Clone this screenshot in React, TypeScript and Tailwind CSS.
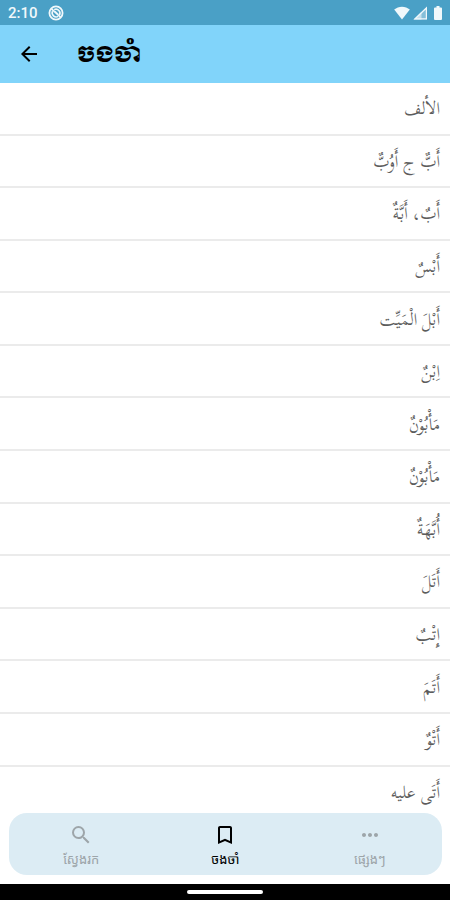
import React from 'react';
import { MdArrowBack, MdBookmarkBorder, MdMoreHoriz, MdSearch } from 'react-icons/md';

interface Tab {
  id: string;
  label: string;
  icon: React.ReactNode;
}

const words = [
  'الألف',
  'أَبٌّ ج أَوُبٌّ',
  'أَبٌ، أَبَّةٌ',
  'أَبْسٌ',
  'أَبْلَ الْمَيِّت',
  'اِبْنٌ',
  'مَأْبُوْنٌ',
  'مَأْبُوْنٌ',
  'أُبَّهَةٌ',
  'أَتَلَ',
  'إِتْبٌ',
  'أَتَمَ',
  'أَتْوٌ',
  'أَتَى عليه',
];

const tabs: Tab[] = [
  { id: 'search', label: 'ស្វែងរក', icon: <MdSearch className="h-6 w-6" /> },
  { id: 'saved', label: 'ចងចាំ', icon: <MdBookmarkBorder className="h-6 w-6" /> },
  { id: 'more', label: 'ផ្សេងៗ', icon: <MdMoreHoriz className="h-6 w-6" /> },
];

const StatusBar: React.FC = () => (
  <div className="flex h-[25px] shrink-0 items-center justify-between bg-[#4aa0c6] px-2 text-[#f0f8fb]">
    <div className="flex items-center gap-2.5">
      <span className="font-['Roboto',sans-serif] text-[15px] font-medium leading-6">2:10</span>
      <svg viewBox="0 0 16 16" className="h-4 w-4" fill="none" stroke="currentColor">
        <circle cx="8" cy="8" r="6.6" strokeWidth="1.8" />
        <path d="M4.600 6.200a4 4 0 005.600 5.200M6.200 4.600a4 4 0 015.200 5.600" strokeWidth="1.600" />
        <path d="M3.500 3.800l9 8.400M7 6.600l3 2.800" strokeWidth="1.600" />
      </svg>
    </div>
    <div className="flex items-center gap-0.5">
      <svg viewBox="0 0 16 14" className="h-3.5 w-4" fill="currentColor">
        <path d="M8 13.400L.2 3.600C2.400 1.700 5.100.7 8 .7s5.600 1 7.800 2.900z" />
      </svg>
      <svg viewBox="0 0 16 14" className="h-3.5 w-4" fill="currentColor">
        <path d="M1.500 13.500L15 .5v13z" opacity=".35" />
        <path d="M1.500 13.500L9.500 5.800v7.700z" opacity=".6" />
        <path d="M1.500 13.500L15 .5v13zM4.500 12.300h9.300V3.400z" fillRule="evenodd" />
      </svg>
      <svg viewBox="0 0 8 14" className="ml-1 h-3.5 w-2" fill="currentColor">
        <path d="M2.500 0h3v1.500H7a1 1 0 011 1V13a1 1 0 01-1 1H1a1 1 0 01-1-1V2.500a1 1 0 011-1h1.500z" />
      </svg>
    </div>
  </div>
);

const App: React.FC = () => {
  const [active, setActive] = React.useState('saved');

  return (
    <div className="flex min-h-screen flex-col bg-white">
      <StatusBar />

      <header className="flex h-[58px] shrink-0 items-center gap-9 bg-[#81d4fa] px-[17px] text-black">
        <button type="button" aria-label="Back">
          <MdArrowBack className="h-6 w-6" />
        </button>
        <h1 className="pt-0.5 font-['Moul','Noto_Sans_Khmer','Noto_Sans',sans-serif] text-[21px] font-normal leading-7">
          ចងចាំ
        </h1>
      </header>

      <ul className="flex flex-1 flex-col" dir="rtl" lang="ar">
        {words.map((word, i) => (
          <li
            key={i}
            className="flex min-h-12 flex-1 items-center border-b-2 border-[#ebebeb] px-[10px] pt-0.5 font-['Scheherazade_New','Amiri','Noto_Naskh_Arabic','Liberation_Serif',serif] text-[17px] leading-6 text-[#5c5c5c] last:border-transparent"
          >
            {word}
          </li>
        ))}
      </ul>

      {/* floating tab bar, overlaps the end of the list */}
      <nav className="relative ml-[9px] mr-2 -mt-1.5 mb-[9px] flex h-[62px] shrink-0 items-center rounded-[18px] bg-[#dcecf4] pt-0.5">
        {tabs.map(tab => (
          <button
            key={tab.id}
            type="button"
            onClick={() => setActive(tab.id)}
            className={`flex flex-1 flex-col items-center gap-1 font-['Noto_Sans_Khmer','Noto_Sans',sans-serif] text-[13px] leading-4 ${
              active === tab.id ? 'text-black' : 'text-[#9da5a9]'
            }`}
          >
            {tab.icon}
            <span>{tab.label}</span>
          </button>
        ))}
      </nav>

      <div className="flex h-4 shrink-0 items-center justify-center bg-black">
        <div className="h-1 w-19 rounded-full bg-white" />
      </div>
    </div>
  );
};

export default App;
